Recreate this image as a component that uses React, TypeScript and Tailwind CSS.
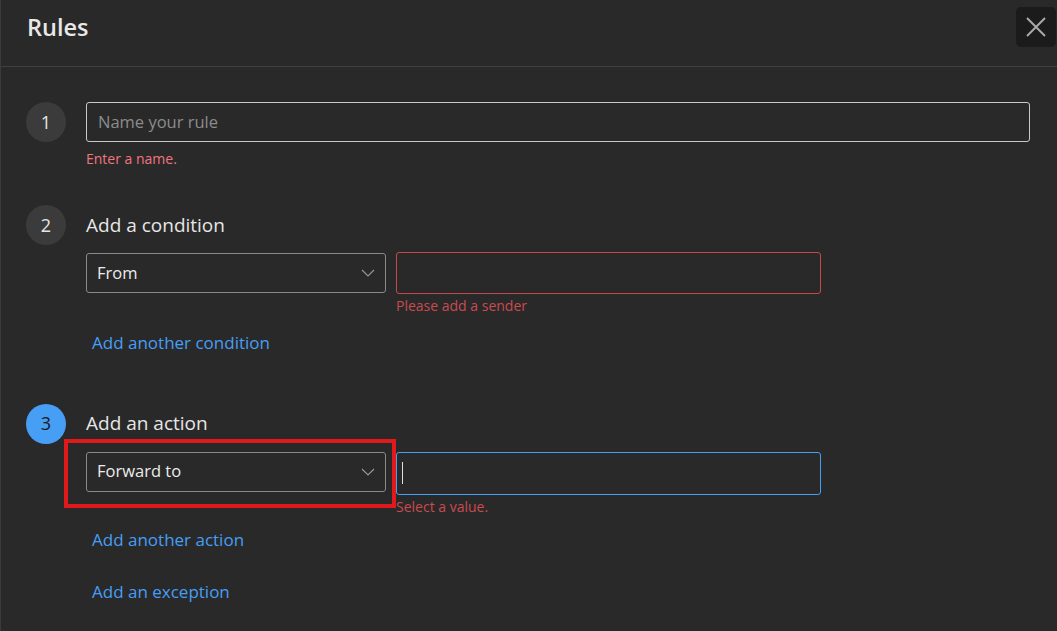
import React from 'react';

const font = { fontFamily: '"Open Sans", "Noto Sans", sans-serif' };

function Chevron() {
  return (
    <svg width="14" height="8" viewBox="0 0 14 8" fill="none">
      <path d="M1 1l6 6 6-6" stroke="#9a9a9a" strokeWidth="1.1" />
    </svg>
  );
}

function Step({ n, active }: { n: number; active?: boolean }) {
  return (
    <div
      className={`w-10 h-10 shrink-0 rounded-full flex items-center justify-center text-[18px] ${
        active ? 'bg-[#479ef5] text-[#1b1b1b]' : 'bg-[#3b3b3b] text-[#e6e6e6]'
      }`}
    >
      {n}
    </div>
  );
}

function Select({ label }: { label: string }) {
  return (
    <div className="w-[300px] h-10 border border-[#8a8a8a] rounded-[3px] flex items-center justify-between pl-[10px] pr-[10px] text-[16.5px] text-[#ececec]">
      <span>{label}</span>
      <Chevron />
    </div>
  );
}

export default function App() {
  return (
    <div className="w-[1057px] h-[631px] bg-[#292929] border-l border-[#3a3a3a] overflow-hidden" style={font}>
      <div className="h-[67px] border-b border-[#404040] flex items-start justify-between pl-[26px] pr-px">
        <h1 className="text-[23.5px] font-semibold text-[#e8e8e8] mt-[10px]">Rules</h1>
        <button className="mt-[7px] w-10 h-[40px] rounded-[5px] bg-[#1b1b1b] flex items-center justify-center">
          <svg width="22" height="22" viewBox="0 0 22 22">
            <path d="M2 2l18 18M20 2L2 20" stroke="#a9a9a9" strokeWidth="2" />
          </svg>
        </button>
      </div>

      <div className="pl-[25px] pr-[27px] pt-[35px]">
        {/* step 1 */}
        <div className="flex gap-5">
          <Step n={1} />
          <div className="flex-1">
            <div className="h-10 border border-[#c8c8c8] rounded-[3px] flex items-center px-[11px] text-[16.5px] text-[#8c8c8c]">
              Name your rule
            </div>
            <div className="mt-[6px] text-[14px] text-[#f07580]">Enter a name.</div>
          </div>
        </div>

        {/* step 2 */}
        <div className="flex gap-5 mt-[36px]">
          <Step n={2} />
          <div className="flex-1">
            <div className="h-10 flex items-center text-[19px] text-[#e6e6e6]">Add a condition</div>
            <div className="flex items-start gap-[10px] mt-[8px]">
              <Select label="From" />
              <div className="-mt-px">
                <div className="w-[425px] h-[42px] border border-[#c4484d] rounded-[3px]" />
                <div className="text-[14px] text-[#c94a50] mt-[1px]">Please add a sender</div>
              </div>
            </div>
            <div className="mt-[14px] ml-[6px] text-[17px] text-[#479ef5]">Add another condition</div>
          </div>
        </div>

        {/* step 3 */}
        <div className="flex gap-5 mt-[48px]">
          <Step n={3} active />
          <div className="flex-1">
            <div className="h-10 flex items-center text-[19px] text-[#e6e6e6]">Add an action</div>
            <div className="flex items-start gap-[10px] mt-[8px]">
              <div className="relative">
                <Select label="Forward to" />
                <div className="absolute left-[-22px] top-[-13px] w-[332px] h-[69px] border-[4px] border-[#e0191c]" />
              </div>
              <div>
                <div className="w-[425px] h-[43px] border border-[#479ef5] rounded-[3px] flex items-center pl-[5px]">
                  <div className="w-px h-[22px] bg-[#e0e0e0]" />
                </div>
                <div className="text-[14px] text-[#c94a50] mt-[1px]">Select a value.</div>
              </div>
            </div>
            <div className="mt-[10px] ml-[6px] text-[17px] text-[#479ef5]">Add another action</div>
            <div className="mt-[27px] ml-[6px] text-[17px] text-[#479ef5]">Add an exception</div>
          </div>
        </div>
      </div>
    </div>
  );
}
